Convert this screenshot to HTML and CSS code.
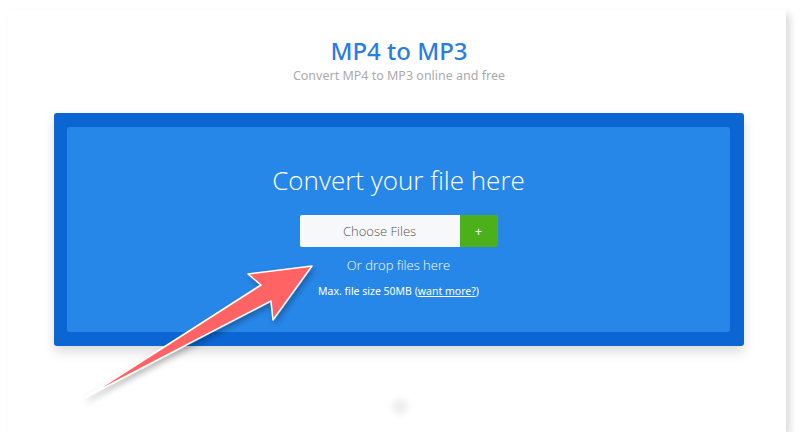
FILE: index.html
```html
<!DOCTYPE html>
<html lang="en">
<head>
    <meta charset="UTF-8">
    <meta name="viewport" content="width=device-width, initial-scale=1.0">
    <title>MP4 to MP3</title>
    <link rel="stylesheet" href="styles.css">
</head>
<body>
    <div class="page">
        <header class="intro">
            <h1>MP4 to MP3</h1>
            <p>Convert MP4 to MP3 online and free</p>
        </header>
        <div class="converter">
            <div class="dropzone">
                <h2>Convert your file here</h2>
                <div class="picker">
                    <button class="choose">Choose Files</button>
                    <button class="more">+</button>
                </div>
                <p class="drop">Or drop files here</p>
                <p class="limit">Max. file size 50MB (<a href="#">want more?</a>)</p>
            </div>
        </div>
        <div class="loader"></div>
    </div>

    <!-- pointer arrow on top of the page -->
    <svg class="pointer" width="800" height="445" viewBox="0 0 800 445">
        <defs>
            <filter id="arrow-shadow" x="-20%" y="-20%" width="140%" height="140%">
                <feDropShadow dx="2" dy="3" stdDeviation="3" flood-color="#000" flood-opacity="0.3"/>
            </filter>
        </defs>
        <polygon points="86,397 261,285 248,274 312,266 273,320 271,301"
                 fill="#ff6363" stroke="#fff" stroke-width="1.5" stroke-linejoin="round"
                 filter="url(#arrow-shadow)"/>
    </svg>
</body>
</html>
```

FILE: styles.css
```css
body {
    margin: 0;
    background-color: #fff;
    font-family: "Noto Sans", "Open Sans", sans-serif;
}

.page {
    position: relative;
    margin: 10px 14px 0 8px;
    height: 422px;
    box-sizing: border-box;
    padding: 26px 42px 0 46px;
    background-color: #fff;
    box-shadow: 4px 4px 7px rgba(0, 0, 0, 0.14);
}

.intro {
    text-align: center;
}

.intro h1 {
    margin: 0;
    font-size: 24px;
    font-weight: 500;
    line-height: 30px;
    color: #2a7de0;
}

.intro p {
    margin: 2px 0 0;
    font-size: 12.5px;
    line-height: 16px;
    color: #ababab;
}

.converter {
    margin-top: 29px;
    padding: 14px 14px 14px 13px;
    background-color: #0b66d4;
    border-radius: 3px;
    box-shadow: 0 6px 12px rgba(0, 0, 0, 0.14);
}

.dropzone {
    height: 205px;
    box-sizing: border-box;
    padding-top: 34px;
    background-color: #2787e9;
    border-radius: 3px;
    text-align: center;
    color: #fff;
}

.dropzone h2 {
    margin: 0;
    font-family: "Open Sans", "Noto Sans", sans-serif;
    font-size: 26px;
    font-weight: 300;
    line-height: 38px;
}

.picker {
    display: flex;
    justify-content: center;
    margin-top: 16px;
}

.picker button {
    height: 32px;
    border: none;
    font-family: "Open Sans", "Noto Sans", sans-serif;
    cursor: pointer;
}

.choose {
    width: 160px;
    background-color: #f7f8fa;
    color: #555;
    font-size: 13px;
    font-weight: 300;
    border-radius: 2px 0 0 2px;
}

.more {
    width: 38px;
    background-color: #4bb01a;
    color: #fff;
    font-size: 13px;
    border-radius: 0 2px 2px 0;
}

.drop {
    margin: 9px 0 0;
    font-family: "Open Sans", "Noto Sans", sans-serif;
    font-size: 13px;
    font-weight: 300;
    line-height: 18px;
}

.limit {
    margin: 10px 0 0;
    font-size: 10.5px;
    line-height: 14px;
}

.limit a {
    color: #fff;
}

.loader {
    position: absolute;
    left: 384px;
    top: 389px;
    width: 16px;
    height: 16px;
    border-radius: 50%;
    background-color: #eee;
    filter: blur(3px);
}

.pointer {
    position: absolute;
    left: 0;
    top: 0;
    pointer-events: none;
}
```
